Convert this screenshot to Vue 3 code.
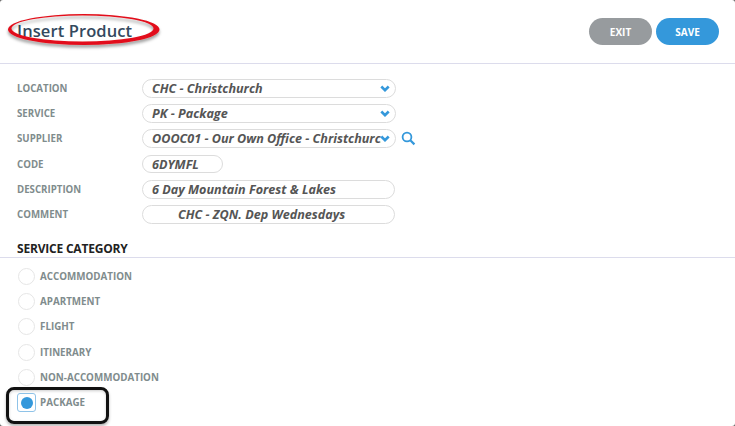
<script setup>
const fields = [
  { label: 'LOCATION', value: 'CHC - Christchurch', type: 'select' },
  { label: 'SERVICE', value: 'PK - Package', type: 'select' },
  { label: 'SUPPLIER', value: 'OOOC01 - Our Own Office - Christchurch', type: 'select', search: true },
  { label: 'CODE', value: '6DYMFL', type: 'short' },
  { label: 'DESCRIPTION', value: '6 Day Mountain Forest & Lakes', type: 'text' },
  { label: 'COMMENT', value: 'CHC - ZQN. Dep Wednesdays', type: 'comment' }
]

const categories = [
  { name: 'ACCOMMODATION' },
  { name: 'APARTMENT' },
  { name: 'FLIGHT' },
  { name: 'ITINERARY' },
  { name: 'NON-ACCOMMODATION' },
  { name: 'PACKAGE', checked: true }
]
</script>

<template>
  <div class="page">
    <header class="head">
      <h1 class="title">Insert Product</h1>
      <div class="actions">
        <button class="btn exit">EXIT</button>
        <button class="btn save">SAVE</button>
      </div>
      <svg class="ring" width="170" height="60" viewBox="0 0 170 60">
        <defs>
          <filter id="ringshadow" x="-10%" y="-30%" width="120%" height="170%">
            <feDropShadow dx="0" dy="2.5" stdDeviation="1.6" flood-color="#000" flood-opacity="0.4" />
          </filter>
        </defs>
        <path
          d="M8 29.5 A75.7 15.5 0 0 1 159.5 29.5 A75.7 15.5 0 0 1 8 29.5 Z M11.5 28.5 A71 13 0 0 0 153.5 28.5 A71 13 0 0 0 11.5 28.5 Z"
          fill="#e2101a"
          fill-rule="evenodd"
          filter="url(#ringshadow)"
        />
      </svg>
    </header>

    <form class="form" @submit.prevent>
      <div v-for="f in fields" :key="f.label" class="row">
        <label class="lbl">{{ f.label }}</label>
        <div class="box" :class="f.type">
          <span class="val">{{ f.value }}</span>
          <svg v-if="f.type === 'select'" class="chev" width="10" height="7" viewBox="0 0 10 7">
            <path d="M1.3 1.5 L5 5.2 L8.7 1.5" fill="none" stroke="#3498db" stroke-width="2.6" />
          </svg>
        </div>
        <svg v-if="f.search" class="search" width="15" height="15" viewBox="0 0 15 15">
          <circle cx="6" cy="6" r="4.4" fill="none" stroke="#3498db" stroke-width="1.8" />
          <path d="M9.3 9.3 L13.4 13.4" stroke="#3498db" stroke-width="2.2" />
        </svg>
      </div>
    </form>

    <h2 class="section">SERVICE CATEGORY</h2>

    <div class="cats">
      <div v-for="c in categories" :key="c.name" class="cat">
        <span class="radio" :class="{ checked: c.checked }"><i v-if="c.checked"></i></span>
        <span class="catname">{{ c.name }}</span>
      </div>
      <div class="callout"></div>
    </div>
  </div>
</template>

<style>
html, body {
  margin: 0;
  background: #666;
}
</style>

<style scoped>
.page {
  width: 735px;
  height: 426px;
  overflow: hidden;
  background: #fff;
  border-radius: 3px;
  font-family: "Open Sans", sans-serif;
}

.head {
  position: relative;
  height: 64px;
  box-sizing: border-box;
  border-bottom: 1px solid #dcdcec;
  display: flex;
  align-items: flex-start;
  justify-content: space-between;
  padding: 18px 16px 0 17px;
}

.title {
  margin: 2px 0 0;
  font-size: 16.5px;
  font-weight: 600;
  line-height: 22px;
  color: #34495e;
  letter-spacing: 0.1px;
}

.ring {
  position: absolute;
  left: 0;
  top: 0;
}

.actions {
  display: flex;
  gap: 4px;
}

.btn {
  width: 63px;
  height: 27px;
  border: none;
  border-radius: 14px;
  color: #fff;
  font-family: inherit;
  font-size: 10px;
  font-weight: 700;
  padding: 0;
}

.exit {
  background: #979b9e;
}

.save {
  background: #3498db;
}

.form {
  padding: 12px 0 0 17px;
  height: 165px;
  box-sizing: border-box;
}

.row {
  display: flex;
  align-items: center;
  height: 25.2px;
}

.lbl {
  width: 125px;
  font-size: 9.7px;
  font-weight: 700;
  color: #7f8c8d;
}

.box {
  position: relative;
  box-sizing: border-box;
  height: 19px;
  width: 254px;
  border: 1px solid #dcdcdc;
  border-radius: 10px;
  padding: 0 9px;
  display: flex;
  align-items: center;
  overflow: hidden;
  font-size: 12.6px;
  font-weight: 700;
  font-style: italic;
  color: #555;
  white-space: nowrap;
}

.box.short {
  width: 81px;
  height: 18px;
}

.box.text,
.box.comment {
  width: 253px;
}

.box.comment {
  padding-left: 35px;
}

.box.select .val {
  width: 229px;
  flex-shrink: 0;
  overflow: hidden;
}

.chev {
  position: absolute;
  right: 5px;
  top: 5px;
}

.search {
  margin-left: 5px;
}

.section {
  margin: 0;
  height: 29px;
  box-sizing: border-box;
  padding: 11px 0 0 17px;
  font-size: 12px;
  line-height: 17px;
  font-weight: 700;
  letter-spacing: -0.2px;
  color: #222;
  border-bottom: 1px solid #dcdcec;
}

.cats {
  position: relative;
  padding: 6px 0 0 18px;
}

.cat {
  display: flex;
  align-items: center;
  height: 25.2px;
  gap: 5px;
}

.radio {
  box-sizing: border-box;
  width: 17px;
  height: 17px;
  border: 1px solid #e6e6e6;
  border-radius: 50%;
  display: flex;
  align-items: center;
  justify-content: center;
}

.radio.checked {
  border: 1px solid #8fc3e8;
  border-radius: 3px;
  width: 19px;
  height: 19px;
  margin-left: -1px;
  margin-right: -1px;
}

.radio i {
  width: 12px;
  height: 12px;
  border-radius: 50%;
  background: #3498db;
}

.catname {
  font-size: 9.8px;
  font-weight: 700;
  color: #7f8c8d;
}

.callout {
  position: absolute;
  left: 6px;
  top: 129px;
  box-sizing: border-box;
  width: 103px;
  height: 37px;
  border: 3px solid #111;
  border-radius: 8px;
  box-shadow: 0 2px 3px rgba(0, 0, 0, 0.3), inset 0 1px 3px rgba(0, 0, 0, 0.2);
}
</style>
